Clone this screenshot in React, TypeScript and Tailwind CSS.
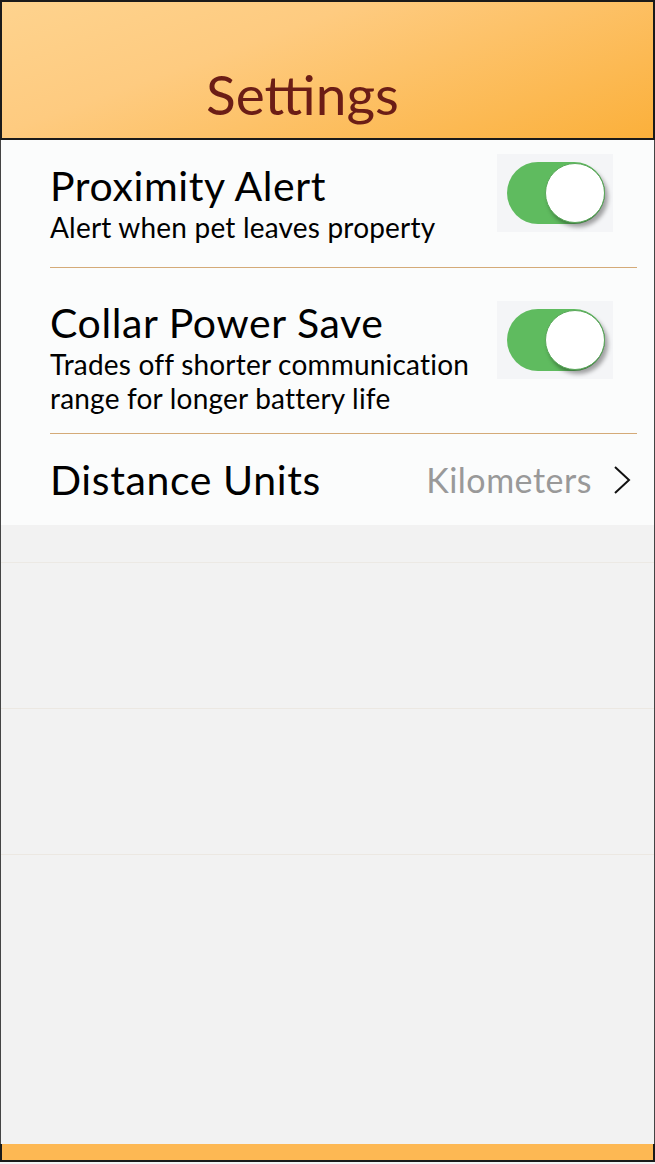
import React from "react";

function Toggle({ className = "" }: { className?: string }) {
  return (
    <div className={`w-[116px] h-[78px] bg-[#f4f5f7] flex items-center pl-[10px] ${className}`}>
      <div className="relative w-[98px] h-[62px] rounded-full bg-[#5fbb5f]">
        <div className="absolute right-0 top-[1px] w-[60px] h-[60px] rounded-full bg-white border border-[#5aa85a] shadow-[3px_4px_4px_rgba(0,0,0,0.35)]" />
      </div>
    </div>
  );
}

export default function App() {
  const font = { fontFamily: "Lato, 'Noto Sans', sans-serif" };

  return (
    <div className="w-[655px] h-[1164px] flex flex-col bg-[#f2f2f2]" style={font}>
      <div className="h-[140px] shrink-0 border-2 border-[#1a1a1a] bg-[linear-gradient(160deg,#fed38e_0%,#fecb80_35%,#fbb03b_100%)] flex items-end justify-center pb-[13px] pr-[50px]">
        <h1 className="text-[55px] leading-[62px] text-[#6b1d16]">Settings</h1>
      </div>

      <div className="flex-1 flex flex-col border-x border-[#444]">
        <div className="bg-[#fbfcfc]">
          <div className="flex items-start pl-[49px] pr-[41px]">
            <div className="flex-1 pt-[23px] pb-[23px]">
              <div className="text-[41px] leading-[46px] tracking-[0.6px] text-black">Proximity Alert</div>
              <div className="mt-[1px] text-[28px] leading-[34px] tracking-[0.2px] text-black">Alert when pet leaves property</div>
            </div>
            <Toggle className="mt-[14px]" />
          </div>
          <div className="ml-[49px] mr-[17px] h-px bg-[#d4aa78]" />

          <div className="flex items-start pl-[49px] pr-[41px]">
            <div className="flex-1 pt-[32px] pb-[18px]">
              <div className="text-[41px] leading-[46px] tracking-[0.6px] text-black whitespace-nowrap">Collar Power Save</div>
              <div className="mt-[1px] text-[28px] leading-[34px] tracking-[0.2px] text-black whitespace-nowrap">
                Trades off shorter communication
                <br />
                range for longer battery life
              </div>
            </div>
            <Toggle className="mt-[33px]" />
          </div>
          <div className="ml-[49px] mr-[17px] h-px bg-[#d4aa78]" />

          <div className="h-[91px] flex items-center pl-[49px] pr-[22px]">
            <div className="flex-1 text-[41px] leading-[46px] tracking-[0.6px] text-black">Distance Units</div>
            <div className="text-[34px] tracking-[0.5px] text-[#999999] mr-[20px]">Kilometers</div>
            <svg width="20" height="30" viewBox="0 0 20 30" fill="none" stroke="#111" strokeWidth="2">
              <path d="M3 2 L17 15 L3 28" />
            </svg>
          </div>
        </div>

        <div className="h-[37px]" />
        <div className="h-px bg-[#ece9e4]" />
        <div className="h-[145px]" />
        <div className="h-px bg-[#ece8e2]" />
        <div className="h-[145px]" />
        <div className="h-px bg-[#ece8e2]" />
        <div className="flex-1" />
      </div>

      <div className="h-[18px] shrink-0 bg-[#fdb853] border-x-2 border-b-2 border-[#1a1a1a]" />
      <div className="h-[2px] shrink-0 bg-[#f2f2f2]" />
    </div>
  );
}
